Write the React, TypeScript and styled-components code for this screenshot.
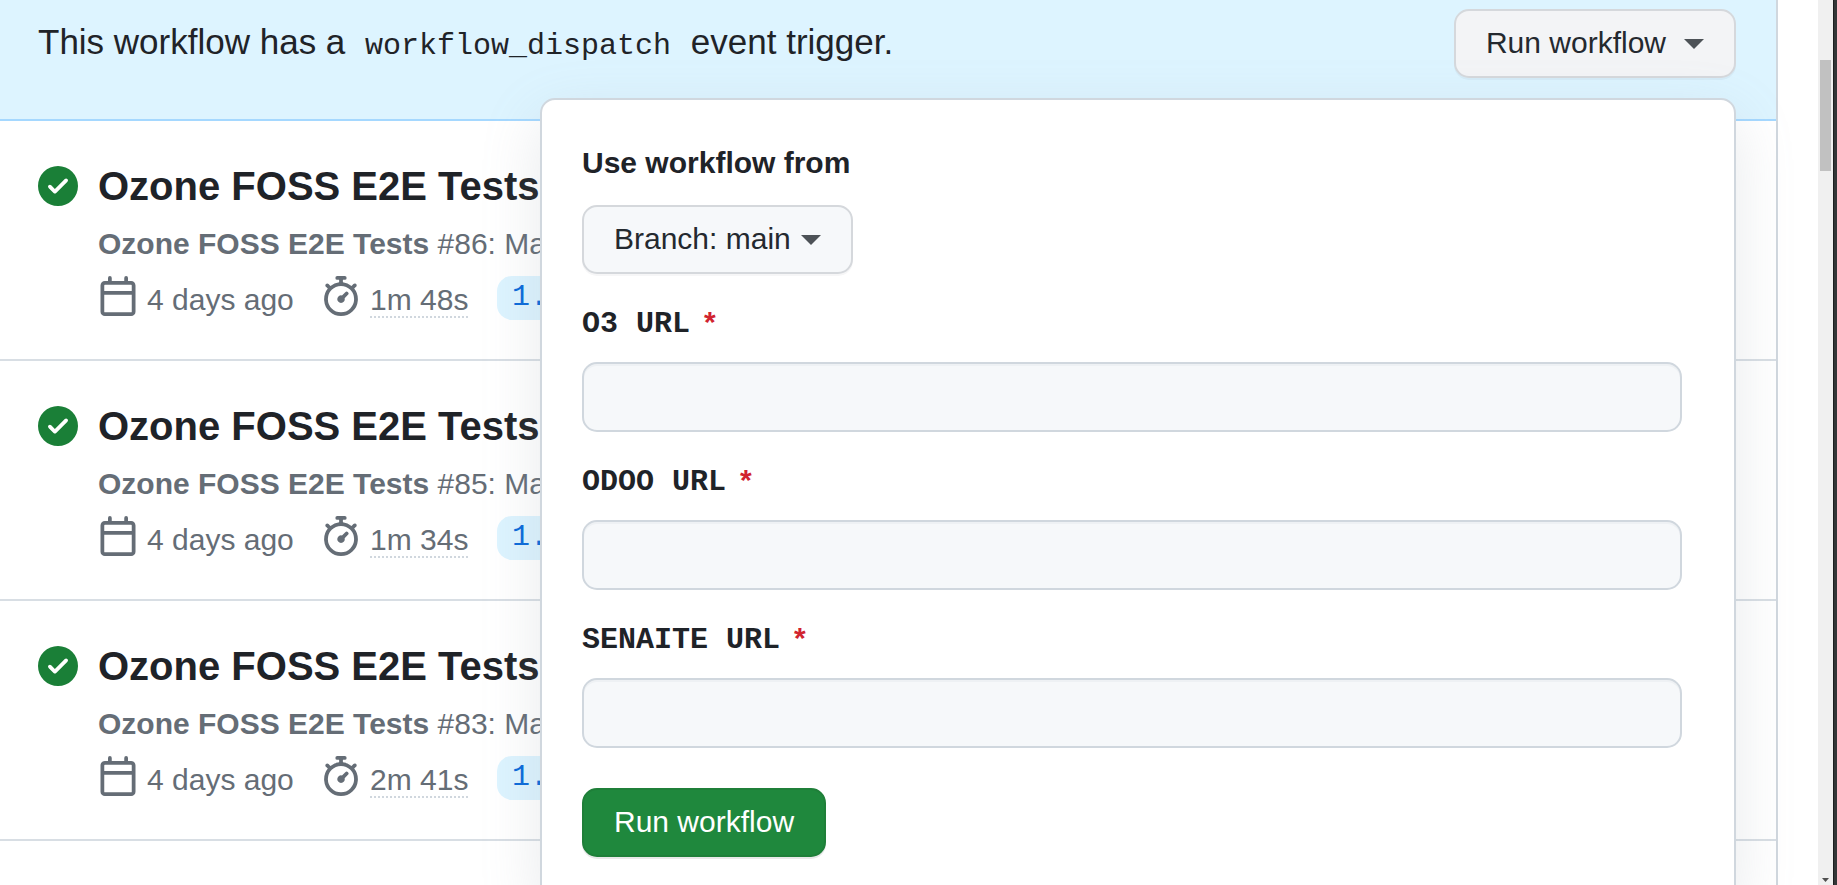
import React from "react";
import styled, { createGlobalStyle, css } from "styled-components";

const sans = '"Liberation Sans", Arial, sans-serif';
const mono = '"Liberation Mono", "Courier New", monospace';

const GlobalStyle = createGlobalStyle`
  *, *::before, *::after { box-sizing: border-box; }
  body {
    margin: 0;
    background: #ffffff;
    color: #1f2328;
    font-family: ${sans};
    font-size: 30px;
    line-height: 45px;
  }
`;

const Page = styled.div`
  display: flex;
  height: 100vh;
  overflow: hidden;
`;

const Content = styled.main`
  flex: 1;
  min-width: 0;
  padding-right: 40px;
`;

const Runs = styled.section`
  min-height: 100%;
  border-right: 2px solid #d0d7de;
`;

const Banner = styled.header`
  display: flex;
  justify-content: space-between;
  align-items: flex-start;
  padding: 9px 40px 41px 38px;
  background: #ddf4ff;
  border-bottom: 2px solid #a5d8ff;
`;

const BannerText = styled.p`
  margin: 0;
  padding-top: 7px;
  font-size: 35px;
  line-height: 52px;
`;

const Code = styled.code`
  padding: 0 10px;
  font-family: ${mono};
  font-size: 30px;
`;

const Dispatch = styled.div`
  position: relative;
`;

const Button = styled.button<{ $primary?: boolean; $open?: boolean }>`
  display: inline-flex;
  align-items: center;
  padding: 9px 30px 11px;
  border: 2px solid #d5d8dc;
  border-radius: 15px;
  background: ${(p) => (p.$open ? "#f3f4f6" : "#f6f8fa")};
  color: #24292f;
  font-family: ${sans};
  font-size: 30px;
  line-height: 45px;
  white-space: nowrap;
  box-shadow: 0 2px 0 rgba(31, 35, 40, 0.04);
  ${(p) =>
    p.$primary &&
    css`
      border-color: #1f7f39;
      background: #1f883d;
      color: #ffffff;
      box-shadow: 0 2px 0 rgba(31, 35, 40, 0.1);
    `}
`;

const Caret = styled.span<{ $gap: number }>`
  margin-top: 2px;
  margin-left: ${(p) => p.$gap}px;
  border: 10px solid transparent;
  border-top-color: #4d5257;
  border-bottom-width: 0;
`;

const Popover = styled.form`
  position: absolute;
  top: calc(100% + 20px);
  right: 0;
  width: 1196px;
  max-width: 80vw;
  padding: 40px 52px 40px 40px;
  border: 2px solid #d0d7de;
  border-radius: 15px;
  background: #ffffff;
  box-shadow: 0 20px 60px rgba(140, 149, 159, 0.2);
`;

const FieldTitle = styled.div`
  margin-bottom: 20px;
  font-weight: 700;
`;

const Field = styled.div`
  display: flex;
  flex-direction: column;
  gap: 18px;
  margin-top: 25px;
`;

const FieldLabel = styled.label`
  display: flex;
  align-items: baseline;
  height: 45px;
  font-family: ${mono};
  font-weight: 700;
`;

const Required = styled.span`
  margin-left: 14px;
  color: #d1242f;
  font-family: ${sans};
`;

const TextInput = styled.input`
  width: 100%;
  height: 70px;
  padding: 12px 30px;
  border: 2px solid #d0d7de;
  border-radius: 15px;
  background: #f6f8fa;
  color: #1f2328;
  font: inherit;
  box-shadow: inset 0 2px 0 rgba(208, 215, 222, 0.2);
`;

const Submit = styled.div`
  margin-top: 40px;
`;

const RunList = styled.ul`
  margin: 0;
  padding: 0;
  list-style: none;
`;

const RunRow = styled.li`
  display: flex;
  gap: 20px;
  height: 240px;
  padding: 35px 38px;
  border-bottom: 2px solid #d8dee4;
  overflow: hidden;
`;

const Status = styled.span`
  display: flex;
  padding-top: 10px;
`;

const RunBody = styled.div`
  min-width: 0;
  white-space: nowrap;
`;

const RunTitle = styled.a`
  display: block;
  color: #1f2328;
  font-size: 40px;
  font-weight: 700;
  line-height: 60px;
  text-decoration: none;
`;

const RunInfo = styled.div`
  margin-top: 5px;
  color: #656d76;
`;

const RunMeta = styled.div`
  display: flex;
  align-items: flex-start;
  margin-top: 10px;
  color: #656d76;
`;

const MetaItem = styled.span<{ $width: number }>`
  display: flex;
  gap: 9px;
  min-width: ${(p) => p.$width}px;
  svg { flex: none; }
`;

const MetaText = styled.span`
  padding-top: 4px;
  line-height: 40px;
`;

const Duration = styled.a`
  height: 42px;
  padding-top: 4px;
  border-bottom: 2px dotted #d0d7de;
  color: #656d76;
  line-height: 40px;
  text-decoration: none;
`;

const BranchTag = styled.a`
  height: 44px;
  padding: 0 15px;
  border-radius: 15px;
  background: #ddf4ff;
  color: #0969da;
  font-family: ${mono};
  line-height: 42px;
  text-decoration: none;
`;

const ScrollTrack = styled.div`
  display: flex;
  flex-direction: column;
  justify-content: space-between;
  align-items: center;
  width: 15px;
  padding: 60px 2px 3px;
  background: #f0f0f0;
`;

const ScrollThumb = styled.div`
  width: 11px;
  height: 111px;
  background: #c1c1c1;
`;

const WindowEdge = styled.div`
  width: 4px;
  border-left: 1px solid #1c1e1f;
  background: #333637;
`;

const icon = { viewBox: "0 0 16 16", width: 40, height: 40, "aria-hidden": true } as const;

const CheckIcon = () => (
  <svg {...icon} fill="#1a7f37">
    <path d="M8 16A8 8 0 1 1 8 0a8 8 0 0 1 0 16Zm3.78-9.72a.751.751 0 0 0-.018-1.042.751.751 0 0 0-1.042-.018L6.75 9.19 5.28 7.72a.751.751 0 0 0-1.042.018.751.751 0 0 0-.018 1.042l2 2a.75.75 0 0 0 1.06 0Z" />
  </svg>
);

const CalendarIcon = () => (
  <svg {...icon} fill="currentColor">
    <path d="M4.75 0a.75.75 0 0 1 .75.75V2h5V.75a.75.75 0 0 1 1.5 0V2h1.25c.966 0 1.75.784 1.75 1.75v10.5A1.75 1.75 0 0 1 13.25 16H2.75A1.75 1.75 0 0 1 1 14.25V3.75C1 2.784 1.784 2 2.75 2H4V.75A.75.75 0 0 1 4.75 0ZM2.5 7.5v6.75c0 .138.112.25.25.25h10.5a.25.25 0 0 0 .25-.25V7.5Zm10.75-4H2.75a.25.25 0 0 0-.25.25V6h11V3.75a.25.25 0 0 0-.25-.25Z" />
  </svg>
);

const StopwatchIcon = () => (
  <svg {...icon} fill="currentColor">
    <path d="M5.75.75A.75.75 0 0 1 6.5 0h3a.75.75 0 0 1 0 1.5h-.75v1l-.001.041a6.724 6.724 0 0 1 3.464 1.435l.007-.006.75-.75a.749.749 0 0 1 1.275.326.749.749 0 0 1-.215.734l-.75.75-.006.007a6.75 6.75 0 1 1-10.548 0L2.72 5.03l-.75-.75a.751.751 0 0 1 .018-1.042.751.751 0 0 1 1.042-.018l.75.75.007.006A6.72 6.72 0 0 1 7.25 2.541V1.5H6.5a.75.75 0 0 1-.75-.75ZM8 14.5a5.25 5.25 0 1 0-.001-10.501A5.25 5.25 0 0 0 8 14.5Zm.389-6.7 1.33-1.33a.75.75 0 1 1 1.061 1.06L9.45 8.861A1.503 1.503 0 0 1 8 10.75a1.499 1.499 0 1 1 .389-2.95Z" />
  </svg>
);

const ScrollDown = () => (
  <svg viewBox="0 0 7 4" width="7" height="4" fill="#505050" aria-hidden="true">
    <path d="M0 0h7L3.5 4Z" />
  </svg>
);

const runs = [
  { number: 86, duration: "1m 48s" },
  { number: 85, duration: "1m 34s" },
  { number: 83, duration: "2m 41s" },
];

const fields = ["O3 URL", "ODOO URL", "SENAITE URL"];

export default function App() {
  return (
    <>
      <GlobalStyle />
      <Page>
        <Content>
          <Runs>
            <Banner>
              <BannerText>
                This workflow has a <Code>workflow_dispatch</Code> event trigger.
              </BannerText>
              <Dispatch>
                <Button type="button" $open aria-expanded="true">
                  Run workflow
                  <Caret $gap={18} />
                </Button>
                <Popover onSubmit={(e) => e.preventDefault()}>
                  <FieldTitle>Use workflow from</FieldTitle>
                  <Button type="button">
                    Branch: main
                    <Caret $gap={10} />
                  </Button>
                  {fields.map((name) => {
                    const id = name.toLowerCase().replace(" ", "-");
                    return (
                      <Field key={id}>
                        <FieldLabel htmlFor={id}>
                          {name}
                          <Required>*</Required>
                        </FieldLabel>
                        <TextInput id={id} type="text" />
                      </Field>
                    );
                  })}
                  <Submit>
                    <Button type="submit" $primary>
                      Run workflow
                    </Button>
                  </Submit>
                </Popover>
              </Dispatch>
            </Banner>
            <RunList>
              {runs.map((run) => (
                <RunRow key={run.number}>
                  <Status>
                    <CheckIcon />
                  </Status>
                  <RunBody>
                    <RunTitle href="#">Ozone FOSS E2E Tests</RunTitle>
                    <RunInfo>
                      <b>Ozone FOSS E2E Tests</b> #{run.number}: Manually
                    </RunInfo>
                    <RunMeta>
                      <MetaItem $width={223}>
                        <CalendarIcon />
                        <MetaText>4 days ago</MetaText>
                      </MetaItem>
                      <MetaItem $width={176}>
                        <StopwatchIcon />
                        <Duration href="#">{run.duration}</Duration>
                      </MetaItem>
                      <BranchTag href="#">1.x</BranchTag>
                    </RunMeta>
                  </RunBody>
                </RunRow>
              ))}
            </RunList>
          </Runs>
        </Content>
        <ScrollTrack>
          <ScrollThumb />
          <ScrollDown />
        </ScrollTrack>
        <WindowEdge />
      </Page>
    </>
  );
}
